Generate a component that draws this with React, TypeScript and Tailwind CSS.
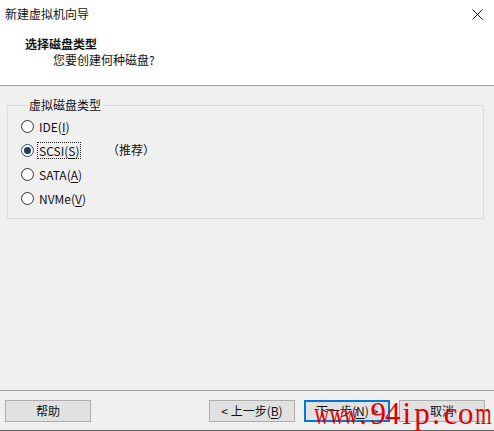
import React from 'react';

const font = { fontFamily: '"Noto Sans CJK SC", "Noto Sans", sans-serif' };

interface Option {
  pre: string;
  key: string;
  post: string;
  checked?: boolean;
  note?: string;
}

const options: Option[] = [
  { pre: 'IDE(', key: 'I', post: ')' },
  { pre: 'SCSI(', key: 'S', post: ')', checked: true, note: '（推荐）' },
  { pre: 'SATA(', key: 'A', post: ')' },
  { pre: 'NVMe(', key: 'V', post: ')' },
];

function Radio({ checked }: { checked?: boolean }) {
  return (
    <span
      className={`w-[13px] h-[13px] rounded-full border bg-white flex items-center justify-center shrink-0 ${
        checked ? 'border-[#33506e]' : 'border-[#333333]'
      }`}
    >
      {checked && <span className="w-[7px] h-[7px] rounded-full bg-[#1c3c60]" />}
    </span>
  );
}

function Button({ label, primary }: { label: React.ReactNode; primary?: boolean }) {
  return (
    <button
      className={`w-[86px] h-[22px] bg-[#e1e1e1] text-[12px] text-[#111] flex items-center justify-center ${
        primary ? 'border-2 border-[#0078d7]' : 'border border-[#adadad]'
      }`}
    >
      {label}
    </button>
  );
}

const mark = 'www.94ip.com'.split('');

export default function App() {
  return (
    <div className="relative w-[494px] h-[431px] bg-[#f0f0f0] flex flex-col text-[#111] overflow-hidden" style={font}>
      {/* Header */}
      <div className="h-[86px] bg-white border-b border-[#a0a0a0] flex flex-col">
        <div className="flex justify-between items-center h-[16px] mt-[6px] pl-[5px] pr-[11px]">
          <span className="text-[12px] leading-[16px]">新建虚拟机向导</span>
          <svg width="11" height="11" viewBox="0 0 11 11">
            <path d="M0.5 0.5 L10.5 10.5 M10.5 0.5 L0.5 10.5" stroke="#111" strokeWidth="1" />
          </svg>
        </div>
        <div className="pl-[25px] mt-[14px] text-[12px] leading-[16px] font-bold">选择磁盘类型</div>
        <div className="pl-[53px] text-[12px] leading-[16px]">您要创建何种磁盘?</div>
      </div>

      {/* Body */}
      <div className="flex-1 pt-[11px] pl-[7px] pr-[10px]">
        <fieldset className="border border-[#dcdcdc] pl-[13px] pt-[1px] pb-[8px]">
          <legend className="text-[12px] leading-[16px] ml-[6px] px-[2px]">虚拟磁盘类型</legend>
          {options.map((o) => (
            <div key={o.key} className="h-[24px] flex items-center text-[12px]">
              <Radio checked={o.checked} />
              <span className="w-[70px] ml-[3px] flex">
                <span
                  className={`px-[1px] leading-[15px] border border-dotted ${
                    o.checked ? 'border-[#222]' : 'border-transparent'
                  }`}
                >
                  {o.pre}
                  <span className="underline underline-offset-2">{o.key}</span>
                  {o.post}
                </span>
              </span>
              {o.note && <span>{o.note}</span>}
            </div>
          ))}
        </fieldset>
      </div>

      {/* Footer */}
      <div className="h-[41px] border-t border-[#a0a0a0] border-b border-b-[#646464] pt-[9px] pl-[5px] pr-[9px] flex">
        <Button label="帮助" />
        <div className="flex-1" />
        <div className="flex gap-[9px]">
          <Button
            label={
              <>
                &lt; 上一步(<span className="underline underline-offset-2">B</span>)
              </>
            }
          />
          <Button
            primary
            label={
              <>
                下一步(<span className="underline underline-offset-2">N</span>) &gt;
              </>
            }
          />
          <Button label="取消" />
        </div>
      </div>

      {/* Watermark */}
      <div
        className="absolute left-[312px] top-[396px] flex text-[31px] leading-[35px] text-[#e00000]"
        style={{ fontFamily: '"Liberation Serif", serif' }}
      >
        {mark.map((c, i) => (
          <span
            key={i}
            className={`inline-block w-[14.6px] text-center ${c === 'w' || c === 'm' ? 'scale-x-[0.68]' : ''}`}
          >
            {c}
          </span>
        ))}
      </div>
    </div>
  );
}
